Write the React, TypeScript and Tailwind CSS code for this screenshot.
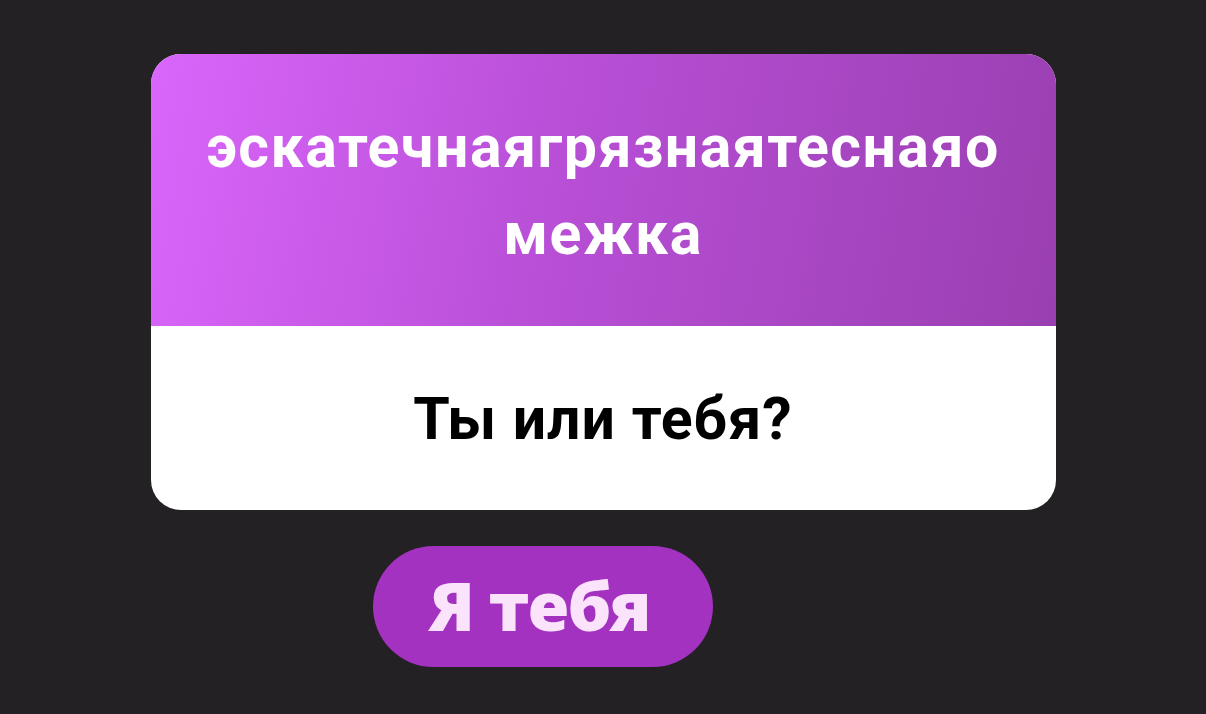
export default function App() {
  return (
    <div className="h-[714px] w-full overflow-hidden bg-[#232124] pt-[54px]">
      <div className="mx-auto w-[905px] overflow-hidden rounded-[30px] bg-white">
        <div className="flex h-[272px] items-center justify-center bg-[linear-gradient(100deg,#da66fb_0%,#b84fd6_45%,#9a3fb1_100%)]">
          <p className="w-[815px] break-all text-center font-['Roboto',sans-serif] text-[59px] font-bold leading-[87px] tracking-[1.5px] text-white">
            эскатечнаягрязнаятеснаяомежка
          </p>
        </div>
        <div className="flex h-[184px] items-center justify-center">
          <p className="font-['Roboto',sans-serif] text-[59px] font-bold leading-none tracking-[1px] text-black">
            Ты или тебя?
          </p>
        </div>
      </div>
      <button className="ml-[373px] mt-[36px] flex h-[121px] w-[340px] items-center justify-center rounded-full bg-[#a232bf] pb-[4px] pr-[8px] font-['Open_Sans',sans-serif] text-[68px] font-extrabold leading-none tracking-[-2px] text-[#fbe4fb]">
        Я тебя
      </button>
    </div>
  );
}
